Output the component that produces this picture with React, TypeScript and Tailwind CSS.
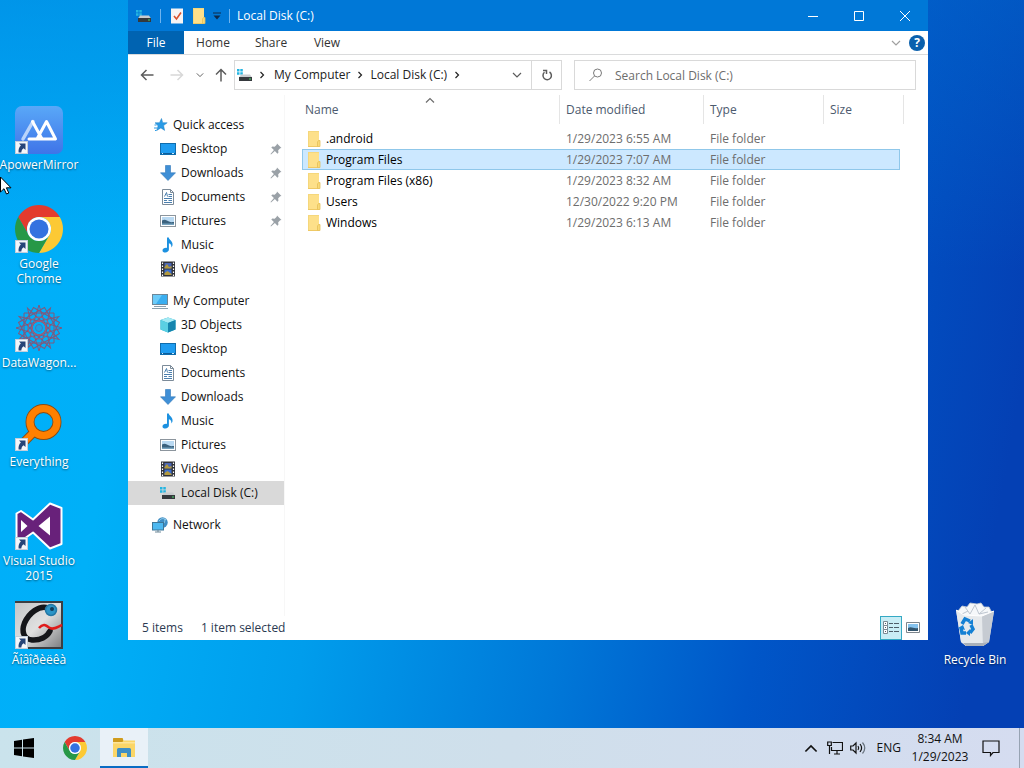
import { useState, type ReactNode } from "react";

interface IconProps {
  className?: string;
}

function ShortcutArrow() {
  return (
    <svg viewBox="0 0 13 13" className="absolute bottom-0 left-0 size-[13px]" aria-hidden="true">
      <rect width="13" height="13" fill="#f4f6fa" />
      <rect x="0.5" y="0.5" width="12" height="12" fill="none" stroke="#c3cedb" />
      <path d="M4 2.500h6.500V9L8.600 7.200C7.300 8 6.600 9.300 6.300 11.500H3.600C3.300 8.500 4 6.200 5.900 4.600Z" fill="#264478" />
    </svg>
  );
}

function ChromeIcon({ className }: IconProps) {
  return (
    <svg viewBox="0 0 48 48" className={className} aria-hidden="true">
      <path d="M3.220 12A24 24 0 0 1 44.780 12H24A12 12 0 0 0 13.610 30Z" fill="#e33b2e" />
      <path d="M44.780 12A24 24 0 0 1 24 48L34.390 30A12 12 0 0 0 24 12Z" fill="#fcc934" />
      <path d="M24 48A24 24 0 0 1 3.220 12L13.610 30A12 12 0 0 0 34.390 30Z" fill="#279847" />
      <circle cx="24" cy="24" r="12" fill="#fff" />
      <circle cx="24" cy="24" r="9.500" fill="#3472e0" />
    </svg>
  );
}

function ApowerIcon() {
  return (
    <svg viewBox="0 0 48 48" className="size-12" aria-hidden="true">
      <defs>
        <linearGradient id="apower" x1="0" y1="0" x2="0" y2="1">
          <stop offset="0" stopColor="#59a8f8" />
          <stop offset="1" stopColor="#3f74e8" />
        </linearGradient>
      </defs>
      <rect width="48" height="48" rx="7" fill="url(#apower)" />
      <path d="M8 33 18 15.500" stroke="#b9d4fb" strokeWidth="3.500" strokeLinecap="round" />
      <path d="M17.500 15.500 27 33H14M22 33 31.500 15.500 40.500 33H28" fill="none" stroke="#fff" strokeWidth="3" strokeLinecap="round" strokeLinejoin="round" />
    </svg>
  );
}

function DataWagonIcon() {
  return (
    <svg viewBox="0 0 48 48" className="size-12" fill="none" stroke="#80597c" strokeWidth="1" aria-hidden="true">
      {[0, 30, 60].map((angle) => (
        <g key={angle} transform={`rotate(${angle} 24 24)`}>
          <path d="M9 9h30v30H9Z" />
          <path d="M24 1 31 24 24 47 17 24ZM1 24l23-7 23 7-23 7Z" />
        </g>
      ))}
      <circle cx="24" cy="24" r="11" stroke="#9c5c78" />
      <circle cx="24" cy="24" r="7" stroke="#a5617b" />
      <circle cx="24" cy="24" r="3.500" fill="#1f9fe2" stroke="#4b78b4" />
    </svg>
  );
}

function EverythingIcon() {
  return (
    <svg viewBox="0 0 48 48" className="size-12" fill="none" aria-hidden="true">
      <path d="M19 29 7 41" stroke="#8a4c14" strokeWidth="9" />
      <circle cx="28.500" cy="19" r="13.500" stroke="#8a4c14" strokeWidth="9" />
      <path d="M20 28 7 41" stroke="#ff8000" strokeWidth="7" />
      <circle cx="28.500" cy="19" r="13.500" stroke="#ff8000" strokeWidth="7.200" />
    </svg>
  );
}

function VisualStudioIcon() {
  return (
    <svg viewBox="0 0 48 48" className="size-12" aria-hidden="true">
      <path
        d="M35 1.500 46.500 6v36L35 46.500 18 30.500 6 39 1.500 36.500V11.500L6 9l12 8.500Z"
        fill="#68217a"
        stroke="#fff"
        strokeWidth="2"
        strokeLinejoin="round"
      />
      <path d="M35 14.500v19L23.500 24ZM6 18l6.500 6L6 30Z" fill="#fff" />
    </svg>
  );
}

function WormIcon() {
  return (
    <svg viewBox="0 0 48 48" className="size-12" fill="none" aria-hidden="true">
      <defs>
        <linearGradient id="worm" x1="0" y1="0" x2="1" y2="1">
          <stop offset="0" stopColor="#c2c4c6" />
          <stop offset="0.5" stopColor="#e0e0e0" />
          <stop offset="1" stopColor="#77797c" />
        </linearGradient>
      </defs>
      <rect width="48" height="48" fill="url(#worm)" />
      <path d="M0 1h48M47 0v48M0 47h48" stroke="#3c3e42" strokeWidth="2" />
      <path d="M33 7C24 4 14 12 9.500 22 6 31 9 38 17 39c8 .5 15-3 18-9" stroke="#15161a" strokeWidth="5.500" strokeLinecap="round" />
      <path d="M24 27c4-5 7-3 10-.5 4 3 8-.5 13-2.500" stroke="#e01b1b" strokeWidth="2.500" />
      <circle cx="36" cy="9" r="5.500" fill="#2b95c8" stroke="#2478a5" strokeWidth="1.500" />
      <circle cx="37" cy="8" r="2" fill="#123a58" />
    </svg>
  );
}

function RecycleBinIcon() {
  return (
    <svg viewBox="0 0 48 48" className="size-12" aria-hidden="true">
      <path d="M5 9 43 10 38 41 32 45H15L10 41Z" fill="#dfe3e8" />
      <path d="m7 10 4-5 5 1 3-4 7 1 4-1 3 4 5 0 3 6-5 4H13Z" fill="#f6f8fa" stroke="#c3cad3" strokeWidth="0.8" />
      <path d="m14 6 5 7 5-9 4 9 7-6M11 13l6-3M28 13l9-2" fill="none" stroke="#bec6d0" />
      <path d="M5 9 10 41l5 4h17l-1-30-18-1Z" fill="#e6e9ec" />
      <path d="m31 15 12-5-5 31-6 4Z" fill="#c6cbd2" />
      <path d="m5 9 8 5 18 1 12-5" fill="none" stroke="#fff" />
      <path d="M12 42 15 45h17l6-4-6 1Z" fill="#a9b0b9" />
      <g fill="none" stroke="#1480d4" strokeWidth="3.500">
        <path d="m11 23 3-5 5 2" />
        <path d="m20 24 2 4-3 4" />
        <path d="M15 32h-4l-1-5" />
      </g>
      <path d="m17 22 5-4v6ZM19 28v7l-4-3ZM7 27l5-3 2 5Z" fill="#1480d4" />
    </svg>
  );
}

function DiskIcon({ className = "size-4" }: IconProps) {
  return (
    <svg viewBox="0 0 16 16" className={className} aria-hidden="true">
      <path d="M0 2h2.500v2.500H0zM3.300 2h2.500v2.500H3.300zM0 5.300h2.500v2.500H0zM3.300 5.300h2.500v2.500H3.300z" fill="#24b5e2" />
      <path d="M4 7.500h9l2 3h-13Z" fill="#c9cccf" />
      <path d="M2 10h13v4H2Z" fill="#35393d" />
      <path d="M12 11.500h2v1h-2Z" fill="#49d66b" />
    </svg>
  );
}

function FolderIcon({ className = "size-4" }: IconProps) {
  return (
    <svg viewBox="0 0 16 16" className={className} aria-hidden="true">
      <path d="M2 0h11v16H2Z" fill="#fde08a" />
      <path d="M2 0h11v1H3v15H2Z" fill="#f5d77c" />
      <path d="M2 15h10v1H2Z" fill="#efc965" />
      <path d="M11.500 15.500V11l1-1.500H14v6Z" fill="#f9d977" stroke="#e5bf58" strokeWidth="0.8" />
    </svg>
  );
}

function StarIcon() {
  return (
    <svg viewBox="0 0 16 16" className="size-4" aria-hidden="true">
      <path d="m9.500 1.500 1.200 4.200 4.500.1-3.600 2.800 1 4.800-3.700-2.500-4.200 2.600 1.400-4.700L3 5.800l4.500-.1Z" fill="#2a9be6" stroke="#1b7ec4" strokeWidth="0.5" />
      <path d="M2.500 8h2M2 11h3M3 13.500h1.500" stroke="#2a9be6" />
    </svg>
  );
}

function DesktopIcon() {
  return (
    <svg viewBox="0 0 16 16" className="size-4" aria-hidden="true">
      <rect x="0.500" y="2.500" width="15" height="11" fill="#1e9cf0" stroke="#0f6dad" />
      <path d="M1 12.500h14" stroke="#0c5c99" />
      <path d="M2 12.500h1M12 12.500h2" stroke="#c9ecff" />
    </svg>
  );
}

function DownloadsIcon() {
  return (
    <svg viewBox="0 0 16 16" className="size-4" aria-hidden="true">
      <path d="M5.500.5h5v7.300h5L8 15.500.5 7.800h5Z" fill="#3f8fd6" stroke="#2f77b8" strokeWidth="0.6" />
    </svg>
  );
}

function DocumentsIcon() {
  return (
    <svg viewBox="0 0 16 16" className="size-4" fill="none" aria-hidden="true">
      <path d="M2.500.5h8l3 3v12h-11Z" fill="#fff" stroke="#7c8b99" />
      <path d="M10.500.5v3h3" stroke="#7c8b99" />
      <path d="M8.500 5.500H12M8.500 7.500H12M4 9.500h8M4 11.500h3M8.500 11.500H12M4 13.500h8M4.500 7.500l2-4 1 4" stroke="#4b7fae" />
    </svg>
  );
}

function PicturesIcon() {
  return (
    <svg viewBox="0 0 16 16" className="size-4" aria-hidden="true">
      <rect x="0.500" y="2.500" width="15" height="11" fill="#fff" stroke="#8c959d" />
      <path d="M2 4h12v8H2Z" fill="#b9d9f2" />
      <path d="M2 7.500c3-2 5 0 7 1s3 .5 5 .5v3H2Z" fill="#3b627e" />
      <path d="M2 10.500h12V12H2Z" fill="#77a3bf" />
    </svg>
  );
}

function MusicIcon() {
  return (
    <svg viewBox="0 0 16 16" className="size-4" aria-hidden="true">
      <path d="M7 .5h1.800c.3 2.700 4.500 3.500 3.700 7.800-.2 1.100-.8 1.700-1.300 2.200.6-2.200-.5-3.800-2.300-4.300v6.300c0 1.600-1.600 3-3.600 3-1.600 0-2.800-.8-2.800-2.100 0-1.700 2.300-3 4.500-2.500Z" fill="#1c91e0" />
    </svg>
  );
}

function VideosIcon() {
  return (
    <svg viewBox="0 0 16 16" className="size-4" aria-hidden="true">
      <rect x="1" y="0.500" width="14" height="15" fill="#303238" />
      <path d="M2.500 1.500v14M13.500 1.500v14" stroke="#fff" strokeWidth="1.200" strokeDasharray="1.500 1.500" />
      <path d="M4.500 2h7v5.500h-7Z" fill="#4b66b5" />
      <path d="M4.500 8.500h7V14h-7Z" fill="#3c6fd0" />
      <path d="m4.500 6 2.500-3 2 3 2.500-1v2.500h-7ZM4.500 12l3-2 4 3v1h-7Z" fill="#b39a3e" />
    </svg>
  );
}

function ComputerIcon() {
  return (
    <svg viewBox="0 0 16 16" className="size-4" aria-hidden="true">
      <rect x="0.500" y="1.500" width="15" height="10" fill="#3aaef0" stroke="#6d8798" />
      <path d="M1 2h9L4 11H1Z" fill="#6bcbf9" />
      <path d="M2 13.500h12M0 15.500h16" stroke="#8aa0ae" />
    </svg>
  );
}

function ObjectsIcon() {
  return (
    <svg viewBox="0 0 16 16" className="size-4" aria-hidden="true">
      <path d="M.5 3 8 .5 15.500 3v9.500L8 15.500.5 12.500Z" fill="#25a7c8" />
      <path d="M.5 3 8 .5 15.500 3 8 6Z" fill="#a4eaf4" />
      <path d="M.5 3 8 6v9.500L.5 12.500Z" fill="#5ad0e3" />
      <path d="m8 6 7.500-3v9.500L8 15.500Z" fill="#1585ae" />
    </svg>
  );
}

function NetworkIcon() {
  return (
    <svg viewBox="0 0 16 16" className="size-4" aria-hidden="true">
      <circle cx="10.500" cy="5.500" r="5.200" fill="#3f8dc4" />
      <path d="M7 4c2-3 5-3 7-1M8 8c3 0 5-2 5-6" fill="none" stroke="#9bd3ef" />
      <rect x="0.500" y="5.500" width="11" height="7.500" fill="#4db8f0" stroke="#3e7697" />
      <path d="M3 15h6M6 13v2" stroke="#6c8797" />
    </svg>
  );
}

function PinIcon() {
  return (
    <svg viewBox="0 0 12 12" className="size-3" aria-hidden="true">
      <path d="m7 .5 4.500 4.500-1.300.3-2 2 .2 2.400-1 1-2.500-2.600L1 11.500.5 11l3.400-3.900L1.300 4.600l1-1 2.400.2 2-2Z" fill="#9aa1a7" />
    </svg>
  );
}

function Chevron({ direction, className }: { direction: "up" | "down" | "right"; className: string }) {
  const paths = {
    up: "M1 7.500 5 3.500 9 7.500",
    down: "M1 3 5 7 9 3",
    right: "M3.500 2 6.500 5 3.500 8",
  };
  return (
    <svg viewBox="0 0 10 10" className={className} fill="none" stroke="currentColor" strokeWidth="1.200" aria-hidden="true">
      <path d={paths[direction]} />
    </svg>
  );
}

function ArrowIcon({ d, className }: { d: string; className: string }) {
  return (
    <svg viewBox="0 0 14 14" className={className} fill="none" stroke="currentColor" strokeWidth="1.500" aria-hidden="true">
      <path d={d} />
    </svg>
  );
}

interface DesktopItemProps {
  label: string;
  icon: ReactNode;
  shortcut?: boolean;
  className?: string;
}

function DesktopItem({ label, icon, shortcut = true, className = "col-start-1" }: DesktopItemProps) {
  return (
    <button type="button" className={`flex flex-col items-center gap-[3px] text-white ${className}`}>
      <span className="relative">
        {icon}
        {shortcut && <ShortcutArrow />}
      </span>
      <span className="leading-[15px] [text-shadow:0_1px_2px_rgba(0,0,0,0.5)]">{label}</span>
    </button>
  );
}

const desktopItems = [
  { label: "ApowerMirror", icon: <ApowerIcon /> },
  { label: "Google Chrome", icon: <ChromeIcon className="size-12" /> },
  { label: "DataWagon...", icon: <DataWagonIcon /> },
  { label: "Everything", icon: <EverythingIcon /> },
  { label: "Visual Studio 2015", icon: <VisualStudioIcon /> },
  { label: "Ãîâîðèëêà", icon: <WormIcon /> },
];

interface TreeEntry {
  label: string;
  icon: ReactNode;
  pinned?: boolean;
  current?: boolean;
}

const tree: { root: TreeEntry; items: TreeEntry[] }[] = [
  {
    root: { label: "Quick access", icon: <StarIcon /> },
    items: [
      { label: "Desktop", icon: <DesktopIcon />, pinned: true },
      { label: "Downloads", icon: <DownloadsIcon />, pinned: true },
      { label: "Documents", icon: <DocumentsIcon />, pinned: true },
      { label: "Pictures", icon: <PicturesIcon />, pinned: true },
      { label: "Music", icon: <MusicIcon /> },
      { label: "Videos", icon: <VideosIcon /> },
    ],
  },
  {
    root: { label: "My Computer", icon: <ComputerIcon /> },
    items: [
      { label: "3D Objects", icon: <ObjectsIcon /> },
      { label: "Desktop", icon: <DesktopIcon /> },
      { label: "Documents", icon: <DocumentsIcon /> },
      { label: "Downloads", icon: <DownloadsIcon /> },
      { label: "Music", icon: <MusicIcon /> },
      { label: "Pictures", icon: <PicturesIcon /> },
      { label: "Videos", icon: <VideosIcon /> },
      { label: "Local Disk (C:)", icon: <DiskIcon />, current: true },
    ],
  },
  { root: { label: "Network", icon: <NetworkIcon /> }, items: [] },
];

const files = [
  { name: ".android", modified: "1/29/2023 6:55 AM" },
  { name: "Program Files", modified: "1/29/2023 7:07 AM" },
  { name: "Program Files (x86)", modified: "1/29/2023 8:32 AM" },
  { name: "Users", modified: "12/30/2022 9:20 PM" },
  { name: "Windows", modified: "1/29/2023 6:13 AM" },
];

function TreeRow({ entry, nested }: { entry: TreeEntry; nested?: boolean }) {
  return (
    <button
      type="button"
      className={`flex h-6 w-full items-center gap-[5px] pr-[2px] text-left ${nested ? "pl-8" : "pl-6"} ${
        entry.current ? "bg-[#d9d9d9]" : "hover:bg-[#e5f3ff]"
      }`}
    >
      {entry.icon}
      <span className="flex-1">{entry.label}</span>
      {entry.pinned && <PinIcon />}
    </button>
  );
}

function TitleBar() {
  return (
    <header className="flex h-[31px] shrink-0 items-center bg-[#0078d7] pl-2 text-white">
      <DiskIcon />
      <span className="ml-2 h-[14px] w-px bg-[#6fb4ef]" />
      <button type="button" aria-label="Properties" className="ml-2">
        <svg viewBox="0 0 16 16" className="size-4" fill="none" aria-hidden="true">
          <path d="M2 .5h12v15H2Z" fill="#f6f4f4" />
          <path d="m5 8 2.500 3L12 4.500" stroke="#d8512d" strokeWidth="1.600" />
        </svg>
      </button>
      <button type="button" aria-label="New folder" className="ml-[6px]">
        <FolderIcon />
      </button>
      <button type="button" aria-label="Customize Quick Access Toolbar" className="ml-[6px]">
        <svg viewBox="0 0 8 8" className="size-2" aria-hidden="true">
          <path d="M0 1h8" stroke="#0d2a4a" />
          <path d="M.5 3.500h7L4 7.500Z" fill="#0d2a4a" />
        </svg>
      </button>
      <span className="ml-2 h-[14px] w-px bg-[#6fb4ef]" />
      <h1 className="ml-[7px] flex-1">Local Disk (C:)</h1>
      <button type="button" aria-label="Minimize" className="flex h-full w-[46px] items-center justify-center">
        <svg viewBox="0 0 10 10" className="size-[10px]" stroke="#fff" aria-hidden="true">
          <path d="M0 5.500h10" />
        </svg>
      </button>
      <button type="button" aria-label="Maximize" className="flex h-full w-[46px] items-center justify-center">
        <svg viewBox="0 0 10 10" className="size-[10px]" fill="none" stroke="#fff" aria-hidden="true">
          <path d="M.5.5h9v9h-9Z" />
        </svg>
      </button>
      <button type="button" aria-label="Close" className="flex h-full w-[46px] items-center justify-center">
        <svg viewBox="0 0 10 10" className="size-[10px]" stroke="#fff" aria-hidden="true">
          <path d="m0 0 10 10M10 0 0 10" />
        </svg>
      </button>
    </header>
  );
}

function Ribbon() {
  return (
    <div className="flex h-6 shrink-0 items-center border-b border-[#dadbdc] text-[#333]">
      <button type="button" className="h-full w-14 bg-[#0063b1] text-white">
        File
      </button>
      <button type="button" className="w-[58px]">
        Home
      </button>
      <button type="button" className="w-[58px]">
        Share
      </button>
      <button type="button" className="w-[54px]">
        View
      </button>
      <button type="button" aria-label="Expand the Ribbon" className="ml-auto text-[#a0a0a0]">
        <Chevron direction="down" className="size-[10px]" />
      </button>
      <button
        type="button"
        aria-label="Help"
        className="mr-[3px] ml-2 flex size-4 items-center justify-center rounded-full bg-[#0a60ad] font-bold text-white"
      >
        ?
      </button>
    </div>
  );
}

function AddressBar() {
  return (
    <div className="flex h-10 shrink-0 items-center px-3 text-[#5c5c5c]">
      <button type="button" aria-label="Back">
        <ArrowIcon d="M13.500 7H1.500M6.500 2 1.500 7l5 5" className="size-[14px]" />
      </button>
      <button type="button" aria-label="Forward" className="ml-4 text-[#d8d8d8]">
        <ArrowIcon d="M.5 7h12M7.500 2l5 5-5 5" className="size-[14px]" />
      </button>
      <button type="button" aria-label="Recent locations" className="ml-3">
        <Chevron direction="down" className="size-2" />
      </button>
      <button type="button" aria-label="Up" className="ml-[10px]">
        <ArrowIcon d="M7 13.500v-12M2 6.500l5-5 5 5" className="size-[14px]" />
      </button>
      <nav aria-label="Address" className="ml-[6px] flex h-[30px] flex-[324] items-center border border-[#d9d9d9] pl-[2px] text-[#222]">
        <DiskIcon />
        <Chevron direction="right" className="ml-1 size-[10px]" />
        <button type="button" className="ml-[7px]">
          My Computer
        </button>
        <Chevron direction="right" className="ml-[5px] size-[10px]" />
        <button type="button" className="ml-[5px]">
          Local Disk (C:)
        </button>
        <Chevron direction="right" className="ml-[5px] size-[10px]" />
        <button type="button" aria-label="Previous locations" className="mr-[9px] ml-auto text-[#5c5c5c]">
          <Chevron direction="down" className="size-[10px]" />
        </button>
        <button type="button" aria-label="Refresh" className="flex h-full w-[30px] items-center justify-center border-l border-[#d9d9d9] text-[#5c5c5c]">
          <svg viewBox="0 0 12 12" className="size-3" fill="none" stroke="currentColor" strokeWidth="1.500" aria-hidden="true">
            <path d="M8.500 3A4.200 4.200 0 1 1 3.500 3.300M2 1.500h3.500V5" />
          </svg>
        </button>
      </nav>
      <label className="ml-3 flex h-[30px] flex-[326] items-center border border-[#d9d9d9] pl-[14px]">
        <span className="sr-only">Search Local Disk (C:)</span>
        <svg viewBox="0 0 14 14" className="size-[14px] shrink-0" fill="none" stroke="#7a7a7a" aria-hidden="true">
          <circle cx="8.500" cy="5" r="4" />
          <path d="M5.500 8 .5 13" />
        </svg>
        <input type="search" placeholder="Search Local Disk (C:)" className="ml-3 h-full w-full min-w-0 leading-5 outline-none placeholder:text-[#6d6d6d]" />
      </label>
    </div>
  );
}

function FileTable({ selected, onSelect }: { selected: string; onSelect: (name: string) => void }) {
  return (
    <table className="w-[602px] table-fixed border-separate border-spacing-0 text-left">
      <colgroup>
        <col className="w-[258px]" />
        <col className="w-36" />
        <col className="w-[120px]" />
        <col className="w-[76px]" />
        <col className="w-1" />
      </colgroup>
      <thead className="text-[#4c5a6e]">
        <tr className="h-[29px]">
          <th scope="col" aria-sort="ascending" className="relative border-r border-[#e5e5e5] pl-[3px] font-normal">
            Name
            <Chevron direction="up" className="absolute top-0 left-1/2 -ml-1.5 size-[10px] text-[#6d6d6d]" />
          </th>
          <th scope="col" className="border-r border-[#e5e5e5] pl-[6px] font-normal">Date modified</th>
          <th scope="col" className="border-r border-[#e5e5e5] pl-[6px] font-normal">Type</th>
          <th scope="col" colSpan={2} className="border-r border-[#e5e5e5] pl-[6px] font-normal">Size</th>
        </tr>
      </thead>
      <tbody className="text-[#6d6d6d] before:block before:h-1">
        {files.map((file) => {
          const cell = file.name === selected ? "border-y border-[#8fc7ea] bg-[#cce8ff]" : "";
          return (
            <tr key={file.name} aria-selected={file.name === selected} className="h-[21px]" onClick={() => onSelect(file.name)}>
              <td className={`${cell} ${cell && "border-l"}`}>
                <span className={`flex items-center gap-1 leading-[19px] text-black ${cell ? "pl-[3px]" : "pl-1"}`}>
                  <FolderIcon />
                  {file.name}
                </span>
              </td>
              <td className={`pl-[6px] leading-[19px] ${cell}`}>{file.modified}</td>
              <td className={`pl-[6px] leading-[19px] ${cell}`}>File folder</td>
              <td className={`${cell} ${cell && "border-r"}`} />
            </tr>
          );
        })}
      </tbody>
    </table>
  );
}

function ExplorerWindow() {
  const [selected, setSelected] = useState("Program Files");

  return (
    <main className="absolute top-0 right-24 bottom-[88px] left-32 flex flex-col bg-white">
      <TitleBar />
      <Ribbon />
      <AddressBar />
      <div className="flex min-h-0 flex-1">
        <nav aria-label="Folders" className="flex w-[156px] shrink-0 flex-col gap-2 pt-[18px] text-[#111]">
          {tree.map(({ root, items }) => (
            <div key={root.label}>
              <TreeRow entry={root} />
              {items.map((item) => (
                <TreeRow key={item.label} entry={item} nested />
              ))}
            </div>
          ))}
        </nav>
        <section aria-label="Files" className="min-w-0 flex-1 overflow-auto border-l border-[#f7f7f7] pl-[17px]">
          <FileTable selected={selected} onSelect={setSelected} />
        </section>
      </div>
      <footer className="flex h-6 shrink-0 items-center gap-[18px] pl-[14px] text-[#2b3a52]">
        <span>{files.length} items</span>
        <span>1 item selected</span>
        <div className="mr-2 ml-auto flex items-center gap-1">
          <button type="button" aria-label="Details view" className="flex h-6 w-[22px] items-center justify-center border border-[#35a9c4] bg-[#c9edf5]">
            <svg viewBox="0 0 16 14" className="h-[14px] w-4" fill="none" aria-hidden="true">
              <path d="M.5.5h4v4h-4zM.5 4.500h4v4h-4zM.5 8.500h4v4h-4z" fill="#fff" stroke="#7b8a94" />
              <path d="M2 2.500h1M2 6.500h1M2 10.500h1M6 2.500h4M11 2.500h5M6 6.500h4M11 6.500h5M6 10.500h4M11 10.500h5" stroke="#4e5d68" />
            </svg>
          </button>
          <button type="button" aria-label="Large icons view">
            <svg viewBox="0 0 14 12" className="h-3 w-[14px]" aria-hidden="true">
              <path d="M.5.5h13v10H.5Z" fill="#fff" stroke="#7d858c" />
              <path d="M2 2h10v7H2Z" fill="#86c3ee" />
              <path d="M2 6c4-2 5 1 10 0v3H2Z" fill="#33566e" />
            </svg>
          </button>
        </div>
      </footer>
    </main>
  );
}

function Taskbar() {
  return (
    <footer className="flex h-10 shrink-0 items-center bg-linear-to-r from-[#cae3ec] via-[#cfdfeb] to-[#d5dcf0] text-[#111]">
      <button type="button" aria-label="Start" className="flex h-full w-12 items-center justify-center">
        <svg viewBox="0 0 20 20" className="size-5" aria-hidden="true">
          <path d="M0 3 8 1.800V9.500H0ZM9 1.600 20 0v9.500H9ZM0 10.500h8v7.700L0 17ZM9 10.500h11V20L9 18.400Z" />
        </svg>
      </button>
      <button type="button" aria-label="Google Chrome" className="ml-[3px] flex h-full w-12 items-center justify-center">
        <ChromeIcon className="size-6" />
      </button>
      <button type="button" aria-label="File Explorer" className="ml-px flex h-full w-12 items-center justify-center border-b-2 border-[#0a6cc4] bg-[#e9f1f8]">
        <svg viewBox="0 0 24 24" className="size-6" aria-hidden="true">
          <path d="M1 3h9l2 2.500h11V22H1Z" fill="#fbd667" />
          <path d="M1 3.500Q1 3 2 3h8q1 0 1 1v2q0 1-1 1H1Z" fill="#cf9b1d" />
          <path d="M1 7h22v1.500H1Z" fill="#fde59a" />
          <path d="M5 22v-7.500Q5 13 6.500 13h11Q19 13 19 14.500V22h-4v-4H9v4Z" fill="#3e8fc5" />
        </svg>
      </button>
      <div className="ml-auto flex h-full items-center">
        <button type="button" aria-label="Show hidden icons">
          <Chevron direction="up" className="size-[14px]" />
        </button>
        <button type="button" aria-label="Network" className="ml-[9px]">
          <svg viewBox="0 0 16 14" className="h-[14px] w-4" fill="none" stroke="currentColor" strokeWidth="1.200" aria-hidden="true">
            <path d="M5.500 1.500h10v8h-11V6M10 9.500v3M7 13h6M.7 1h3.600v3.500H.7ZM2.500 4.500V13" />
          </svg>
        </button>
        <button type="button" aria-label="Volume" className="ml-[7px]">
          <svg viewBox="0 0 17 14" className="h-[14px] w-[17px]" fill="none" stroke="currentColor" strokeWidth="1.200" aria-hidden="true">
            <path d="M.7 5h2.300L6 2v10L3 9H.7ZM8 5q1.500 2 0 4M10 3q3.200 4 0 8" />
            <path d="M12.500 1.500q4.500 5.500 0 11" stroke="#66717c" />
          </svg>
        </button>
        <button type="button" className="ml-[10px]">
          ENG
        </button>
        <button type="button" className="ml-[10px] w-[58px] text-center leading-[18px] whitespace-nowrap">
          8:34 AM
          <br />
          1/29/2023
        </button>
        <button type="button" aria-label="Notifications" className="ml-[13px]">
          <svg viewBox="0 0 18 18" className="size-[18px]" fill="none" stroke="currentColor" strokeWidth="1.200" aria-hidden="true">
            <path d="M1 2h16v11.500h-6L8.500 16.500V13.500H1Z" />
          </svg>
        </button>
        <button type="button" aria-label="Show desktop" className="ml-[19px] h-full w-[5px] border-l border-[#97a3b3]" />
      </div>
    </footer>
  );
}

export default function App() {
  return (
    <div className="flex h-screen flex-col overflow-hidden bg-[linear-gradient(180deg,rgba(0,112,208,0.4),transparent_35%),linear-gradient(100deg,#00aefa_0%,#00b0f8_16%,#009dec_36%,#0078d8_58%,#0056c8_75%,#0440b4_94%)] font-['Open_Sans','Noto_Sans',sans-serif] text-xs">
      <div className="relative min-h-0 flex-1">
        <div className="grid auto-rows-[99px] grid-cols-[78px_1fr_78px] pt-[106px] pr-[10px]">
          {desktopItems.map((item) => (
            <DesktopItem key={item.label} label={item.label} icon={item.icon} />
          ))}
          <DesktopItem label="Recycle Bin" icon={<RecycleBinIcon />} shortcut={false} className="col-start-3 row-start-6" />
        </div>
        <ExplorerWindow />
        <svg viewBox="0 0 12 19" className="absolute top-[176px] left-0 h-[19px] w-3" aria-hidden="true">
          <path d="M.5 1v15l3.500-3.300L6.500 18l2.300-1-2.400-5.200H11Z" fill="#fff" stroke="#000" />
        </svg>
      </div>
      <Taskbar />
    </div>
  );
}
